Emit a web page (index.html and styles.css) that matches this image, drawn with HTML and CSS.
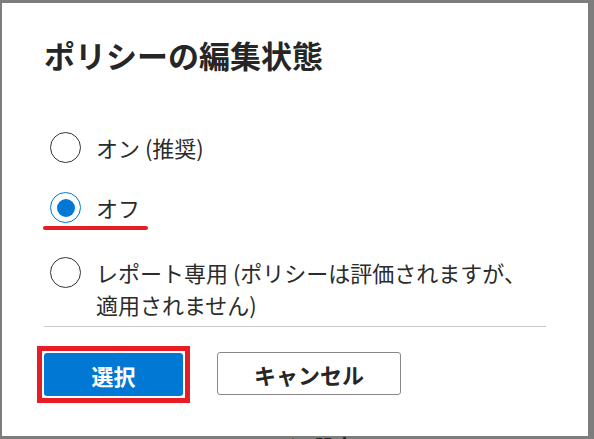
FILE: index.html
```html
<!DOCTYPE html>
<html lang="ja">
<head>
    <meta charset="UTF-8">
    <meta name="viewport" content="width=device-width, initial-scale=1.0">
    <title>ポリシーの編集状態</title>
    <link rel="stylesheet" href="styles.css">
</head>
<body>

    <div class="dialog">
        <h1 class="dialog-title">ポリシーの編集状態</h1>

        <div class="options">
            <label class="option">
                <span class="radio"></span>
                <span class="option-text">オン (推奨)</span>
            </label>
            <label class="option is-checked">
                <span class="radio"><span class="radio-dot"></span></span>
                <span class="option-text">オフ</span>
                <span class="mark-line"></span>
            </label>
            <label class="option option-last">
                <span class="radio"></span>
                <span class="option-text">レポート専用 (ポリシーは評価されますが、<br>適用されません)</span>
            </label>
        </div>

        <div class="divider"></div>

        <div class="actions">
            <div class="mark-box">
                <button class="btn btn-primary">選択</button>
            </div>
            <button class="btn btn-default">キャンセル</button>
        </div>
    </div>

    <div class="behind">▶ 設定</div>

</body>
</html>
```

FILE: styles.css
```css
* {
    margin: 0;
    padding: 0;
    box-sizing: border-box;
}

body {
    font-family: "Noto Sans CJK JP", "Noto Sans", sans-serif;
    background: #7d7d7d;
    color: #2b2b2b;
    width: 594px;
    height: 439px;
    overflow: hidden;
    padding: 3px 0 0 2px;
}

.dialog {
    background: #fff;
    width: 586px;
    height: 433px;
    padding: 32px 42px 0 42px;
}

.dialog-title {
    font-size: 31px;
    line-height: 40px;
    font-weight: 700;
    color: #262626;
}

.options {
    display: flex;
    flex-direction: column;
    gap: 28px;
    margin-top: 56px;
}

.option {
    position: relative;
    display: flex;
    align-items: flex-start;
    font-size: 22px;
    line-height: 32px;
}

.option-last {
    margin-top: 5px;
}

.radio {
    flex: none;
    width: 31px;
    height: 31px;
    margin: 1px 15px 0 6px;
    border: 1px solid #333;
    border-radius: 50%;
    display: flex;
    align-items: center;
    justify-content: center;
}

.is-checked .radio {
    border-color: #0078d4;
}

.radio-dot {
    width: 18px;
    height: 18px;
    border-radius: 50%;
    background: #0078d4;
}

/* red annotation under the selected option */
.mark-line {
    position: absolute;
    left: -1px;
    top: 35px;
    width: 105px;
    height: 4px;
    border-radius: 2px;
    background: #e81c24;
}

.divider {
    height: 1px;
    background: #c8c8c8;
    margin-top: 6px;
}

.actions {
    display: flex;
    align-items: flex-start;
    gap: 27px;
    margin-top: 19px;
    margin-left: -7px;
}

/* red annotation box around the chosen button */
.mark-box {
    border: 5px solid #e81c24;
    padding: 2px;
}

.btn {
    display: block;
    font-family: inherit;
    font-size: 22px;
    font-weight: 700;
    height: 43px;
    border-radius: 3px;
    cursor: pointer;
}

.btn-primary {
    width: 139px;
    background: #0078d4;
    color: #fff;
    border: none;
}

.btn-default {
    width: 184px;
    margin-top: 6px;
    background: #fff;
    color: #262626;
    border: 1px solid #8a8886;
}

.behind {
    font-size: 20px;
    line-height: 20px;
    font-weight: 700;
    color: #222;
    padding-left: 288px;
    margin-top: 1px;
}
```
